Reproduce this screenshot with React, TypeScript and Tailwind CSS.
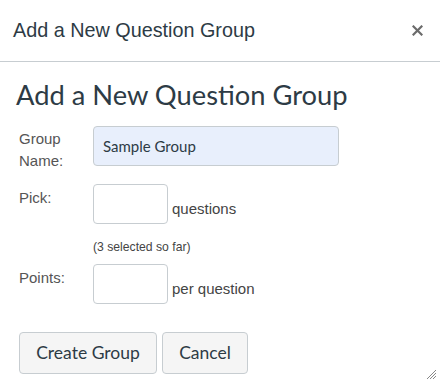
const arial = { fontFamily: '"Liberation Sans", Arial, sans-serif' };
const lato = { fontFamily: 'Lato, "Liberation Sans", sans-serif' };

export default function App() {
  return (
    <div className="w-[440px] h-[383px] bg-white overflow-hidden relative text-[#2d3b45]">
      <div className="h-[62px] border-b border-[#c7cdd1] flex items-center justify-between pl-[13px] pr-[17px]">
        <h1 className="text-[19.8px] leading-none pt-[1px]" style={arial}>
          Add a New Question Group
        </h1>
        <button className="text-[#666] pb-[1px]" aria-label="Close">
          <svg width="11" height="11" viewBox="0 0 11 11">
            <path d="M1.5 1.5l8 8M9.5 1.5l-8 8" stroke="#6b6b6b" strokeWidth="2.2" strokeLinecap="square" />
          </svg>
        </button>
      </div>

      <div className="pl-[16px] pt-[15px]">
        <h2 className="text-[27.3px] leading-[36px]" style={lato}>
          Add a New Question Group
        </h2>

        <div className="mt-[13px] pl-[3px] text-[15px] text-[#555]" style={arial}>
          <div className="flex h-[40px]">
            <div className="w-[74px] leading-[22px] pt-[2px] shrink-0">
              Group
              <br />
              Name:
            </div>
            <input
              defaultValue="Sample Group"
              className="w-[246px] h-[40px] rounded-[4px] border border-[#c7cdd1] bg-[#e8effc] px-[9px] text-[15px] text-[#2d3b45] outline-none"
              style={lato}
            />
          </div>

          <div className="flex h-[40px] mt-[18px]">
            <div className="w-[74px] leading-[22px] pt-[3px] shrink-0">Pick:</div>
            <input className="w-[75px] h-[40px] rounded-[4px] border border-[#c7cdd1] bg-white outline-none" />
            <span className="self-end ml-[4px] pb-[5px] leading-[20px] text-[#444]">questions</span>
          </div>

          <div className="ml-[74px] mt-[16px] text-[12.2px] leading-[14px] text-[#444]">(3 selected so far)</div>

          <div className="flex h-[40px] mt-[10px]">
            <div className="w-[74px] leading-[22px] pt-[3px] shrink-0">Points:</div>
            <input className="w-[75px] h-[40px] rounded-[4px] border border-[#c7cdd1] bg-white outline-none" />
            <span className="self-end ml-[4px] pb-[5px] leading-[20px] text-[#444]">per question</span>
          </div>

          <div className="flex gap-[5px] mt-[28px]" style={lato}>
            <button className="h-[42px] w-[138px] rounded-[4px] border border-[#c7cdd1] bg-[#f5f5f5] text-[17.5px] text-[#2d3b45]">
              Create Group
            </button>
            <button className="h-[42px] w-[86px] rounded-[4px] border border-[#c7cdd1] bg-[#f5f5f5] text-[17.5px] text-[#2d3b45]">
              Cancel
            </button>
          </div>
        </div>
      </div>

      <svg className="absolute right-[3px] bottom-[3px]" width="12" height="12" viewBox="0 0 12 12">
        <path d="M11 2L2 11M11 5L5 11M11 8L8 11" stroke="#888" strokeWidth="1" />
      </svg>
    </div>
  );
}
